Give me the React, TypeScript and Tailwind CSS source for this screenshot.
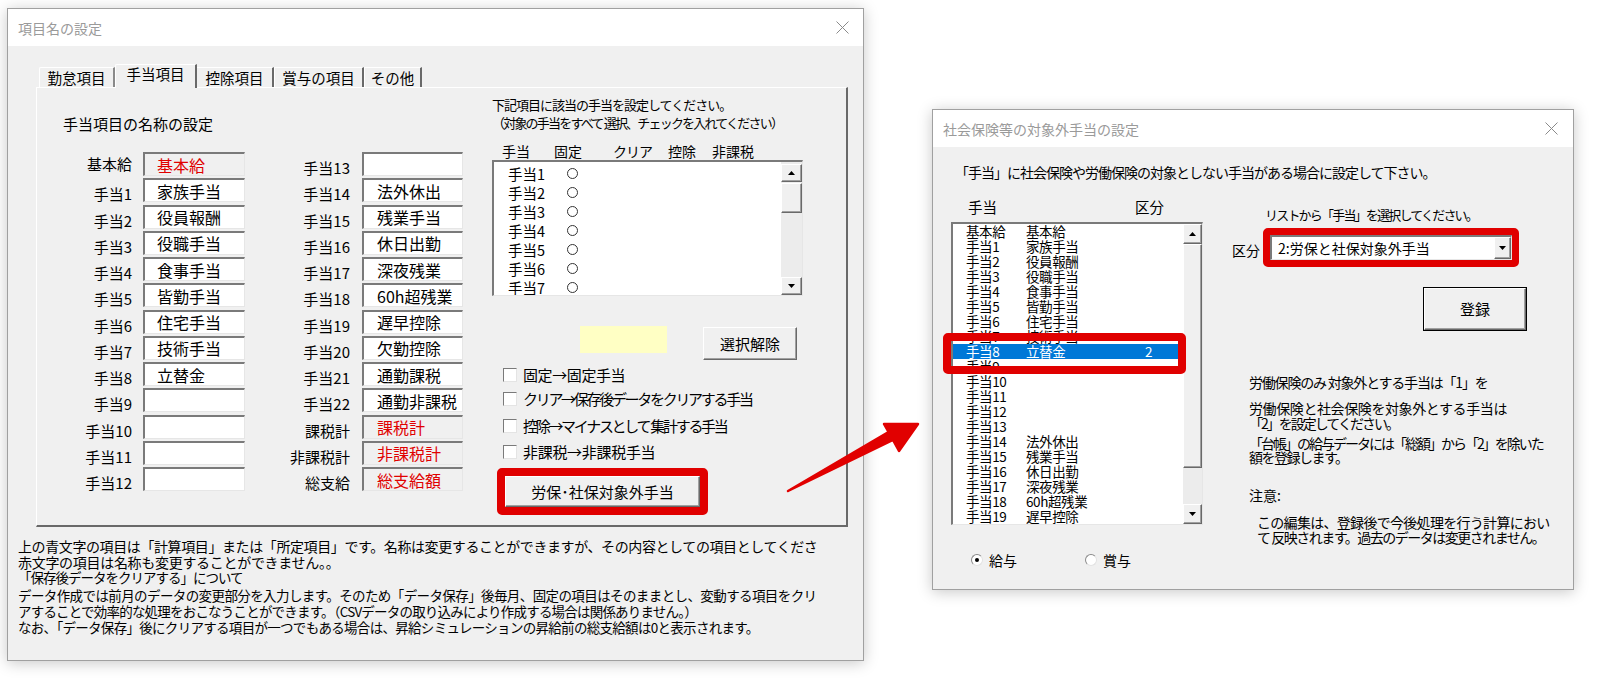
import React from 'react';

const sunken =
  'border-t-2 border-l-2 border-b border-r border-t-[#7a7a7a] border-l-[#7a7a7a] border-b-[#e6e6e6] border-r-[#e6e6e6]';
const raised =
  'border border-t-white border-l-white border-b-[#696969] border-r-[#696969] shadow-[inset_-1px_-1px_0_#a0a0a0]';

function CloseX() {
  return (
    <svg width="13" height="13" viewBox="0 0 13 13">
      <path d="M0.5 0.5 L12.5 12.5 M12.5 0.5 L0.5 12.5" stroke="#8a8a8a" strokeWidth="1" fill="none" />
    </svg>
  );
}

function Tri({ dir }: { dir: 'up' | 'down' }) {
  return (
    <svg width="7" height="4" viewBox="0 0 7 4">
      <path d={dir === 'up' ? 'M0 4 L3.5 0 L7 4Z' : 'M0 0 L7 0 L3.5 4Z'} fill="#000" />
    </svg>
  );
}

function SBtn({ dir, className }: { dir: 'up' | 'down'; className: string }) {
  return (
    <div className={`${raised} ${className} bg-[#f0f0f0] flex items-center justify-center shrink-0`}>
      <Tri dir={dir} />
    </div>
  );
}

interface FieldRow {
  label: string;
  value: string;
  fixed?: boolean;
  lb?: boolean;
}

const col1: FieldRow[] = [
  { label: '基本給', value: '基本給', fixed: true, lb: true },
  { label: '手当1', value: '家族手当' },
  { label: '手当2', value: '役員報酬' },
  { label: '手当3', value: '役職手当' },
  { label: '手当4', value: '食事手当' },
  { label: '手当5', value: '皆勤手当' },
  { label: '手当6', value: '住宅手当' },
  { label: '手当7', value: '技術手当' },
  { label: '手当8', value: '立替金' },
  { label: '手当9', value: '' },
  { label: '手当10', value: '' },
  { label: '手当11', value: '' },
  { label: '手当12', value: '' },
];

const col2: FieldRow[] = [
  { label: '手当13', value: '' },
  { label: '手当14', value: '法外休出' },
  { label: '手当15', value: '残業手当' },
  { label: '手当16', value: '休日出勤' },
  { label: '手当17', value: '深夜残業' },
  { label: '手当18', value: '60h超残業' },
  { label: '手当19', value: '遅早控除' },
  { label: '手当20', value: '欠勤控除' },
  { label: '手当21', value: '通勤課税' },
  { label: '手当22', value: '通勤非課税' },
  { label: '課税計', value: '課税計', fixed: true },
  { label: '非課税計', value: '非課税計', fixed: true },
  { label: '総支給', value: '総支給額', fixed: true },
];

function FieldColumn({ rows, second }: { rows: FieldRow[]; second?: boolean }) {
  return (
    <div className="flex flex-col">
      {rows.map((r) => (
        <div key={r.label} className="flex h-[26.25px]">
          <div
            className={`${second ? 'w-[105px] mr-[12px]' : 'w-[69px] mr-[11px]'} h-[24px] flex justify-end items-end text-[15px] leading-[16px] whitespace-nowrap ${r.lb ? 'pb-[4px]' : 'pb-0'}`}
          >
            {r.label}
          </div>
          <div
            className={`${sunken} ${second ? 'w-[101px] pl-[13px]' : 'w-[102px] pl-[12px]'} h-[24px] flex items-center text-[16px] leading-[20px] whitespace-nowrap ${r.fixed ? 'bg-[#f0f0f0] text-[#e00000]' : 'bg-white text-black'}`}
          >
            {r.value}
          </div>
        </div>
      ))}
    </div>
  );
}

function CheckRow({ text, className, track }: { text: string; className: string; track: string }) {
  return (
    <div className={`flex items-center ${className}`}>
      <span className="ml-[11px] w-[14px] h-[14px] bg-white border-t border-l border-t-[#7a7a7a] border-l-[#7a7a7a] border-b border-r border-b-[#e4e4e4] border-r-[#e4e4e4]" />
      <span className={`ml-[6px] text-[15px] leading-[16px] whitespace-nowrap ${track}`}>{text}</span>
    </div>
  );
}

function LeftDialog() {
  return (
    <div className="absolute left-[7px] top-[8px] w-[857px] h-[653px] flex flex-col border border-[#a0a0a0] bg-[#f0f0f0] shadow-[0_2px_14px_rgba(0,0,0,0.22)]">
      <div className="h-[37px] shrink-0 bg-white flex items-center justify-between pl-[10px] pr-[14px]">
        <span className="text-[14px] leading-[16px] text-[#9a9a9a]">項目名の設定</span>
        <CloseX />
      </div>

      <div className="flex-1 flex flex-col pt-[18px]">
        {/* tabs */}
        <div className="flex items-end h-[23px] ml-[31px] text-[14.5px] leading-[16px]">
          <div className="h-[20px] w-[76px] flex items-center justify-center border-t border-l border-r-2 border-t-white border-l-white border-r-[#8a8a8a] rounded-tl-[2px]">
            勤怠項目
          </div>
          <div className="relative z-10 -mb-px h-[24px] w-[82px] flex justify-center pt-[1px] border-t border-l border-r-2 border-t-white border-l-white border-r-[#696969] rounded-tl-[2px] bg-[#f0f0f0]">
            手当項目
          </div>
          <div className="h-[20px] w-[77px] flex items-center justify-center border-t border-r-2 border-t-white border-r-[#696969]">
            控除項目
          </div>
          <div className="h-[20px] w-[90px] flex items-center justify-center border-t border-l border-r-2 border-t-white border-l-white border-r-[#696969]">
            賞与の項目
          </div>
          <div className="h-[20px] w-[58px] flex items-center justify-center border-t border-l border-r-2 border-t-white border-l-white border-r-[#696969]">
            その他
          </div>
        </div>

        {/* panel */}
        <div className="ml-[28px] w-[812px] h-[440px] shrink-0 flex border-t border-l border-t-white border-l-white border-r-2 border-b-2 border-r-[#696969] border-b-[#696969]">
          <div className="w-[455px] shrink-0 pl-[26px] pt-[28px] flex flex-col">
            <div className="text-[15px] leading-[16px]">手当項目の名称の設定</div>
            <div className="mt-[20px] flex">
              <FieldColumn rows={col1} />
              <FieldColumn rows={col2} second />
            </div>
          </div>

          <div className="flex-1 pt-[8px] flex flex-col">
            <div className="text-[13px] leading-[18px] tracking-[-1px] whitespace-nowrap">
              下記項目に該当の手当を設定してください。
            </div>
            <div className="text-[13px] leading-[18px] tracking-[-1.8px] whitespace-nowrap">
              （対象の手当をすべて 選択、チェックを入れてください）
            </div>
            <div className="mt-[11px] h-[16px] flex text-[14px] leading-[16px]">
              <span className="ml-[10px] w-[52px]">手当</span>
              <span className="w-[59px]">固定</span>
              <span className="w-[55px] tracking-[-1px]">クリア</span>
              <span className="w-[44px]">控除</span>
              <span>非課税</span>
            </div>
            <div className={`${sunken} mt-[1px] w-[311px] h-[136px] bg-white flex`}>
              <div className="flex-1 pt-[2px] overflow-hidden">
                {[1, 2, 3, 4, 5, 6, 7].map((n) => (
                  <div key={n} className="h-[19px] flex items-center pl-[14px] text-[14.5px] leading-[16px]">
                    <span className="w-[59px]">手当{n}</span>
                    <span className="w-[11px] h-[11px] rounded-full border border-[#333]" />
                  </div>
                ))}
              </div>
              <div className="w-[21px] flex flex-col bg-[#ececec] pt-[2px]">
                <SBtn dir="up" className="h-[18px]" />
                <div className={`${raised} mt-[1px] h-[30px] bg-[#f0f0f0]`} />
                <div className="flex-1" />
                <SBtn dir="down" className="h-[18px]" />
              </div>
            </div>

            <div className="mt-[30px] flex items-start">
              <div className="ml-[88px] w-[87px] h-[27px] bg-[#ffffc4]" />
              <div className={`${raised} ml-[36px] mt-[1px] w-[94px] h-[33px] bg-[#f0f0f0] flex items-center justify-center text-[15px] leading-[16px]`}>
                選択解除
              </div>
            </div>

            <CheckRow text="固定→固定手当" className="mt-[3px] h-[24px]" track="tracking-[-0.4px]" />
            <CheckRow text="クリア→保存後データをクリアする手当" className="h-[24px]" track="tracking-[-2.3px]" />
            <CheckRow text="控除→マイナスとして 集計する手当" className="mt-[2px] h-[26px]" track="tracking-[-2.3px]" />
            <CheckRow text="非課税→非課税手当" className="h-[26px]" track="tracking-[-0.3px]" />

            <div className="mt-[3px] ml-[5px] w-[211px] h-[47px] border-[8px] border-[#e00000] rounded-[5px]">
              <div className={`${raised} w-full h-full bg-[#f0f0f0] flex items-center justify-center text-[15px] leading-[16px]`}>
                労保･社保対象外手当
              </div>
            </div>
          </div>
        </div>

        {/* notes */}
        <div className="pl-[10px] mt-[11px] flex flex-col whitespace-nowrap">
          <div className="h-[16px] text-[14px] leading-[16px] tracking-[-0.4px]">
            上の青文字の項目は「計算項目」または「所定項目」です。名称は変更することができますが、その内容としての項目としてくださ
          </div>
          <div className="h-[16px] text-[14px] leading-[16px] tracking-[-0.3px]">
            赤文字の項目は名称も変更することができません。。
          </div>
          <div className="h-[15px] text-[13.5px] leading-[15px] tracking-[-1px]">「保存後データをクリアする」について</div>
          <div className="mt-[2px] h-[16px] text-[13.5px] leading-[16px] tracking-[-0.6px]">
            データ作成では前月のデータの変更部分を入力します。そのため「データ保存」後毎月、固定の項目はそのままとし、変動する項目をクリ
          </div>
          <div className="h-[16px] text-[13.5px] leading-[16px] tracking-[-0.8px]">
            アすることで効率的な処理をおこなうことができます。（CSVデータの取り込みにより作成する場合は関係ありません。）
          </div>
          <div className="h-[16px] text-[13.5px] leading-[16px] tracking-[-0.7px]">
            なお、「データ保存」後にクリアする項目が一つでもある場合は、昇給シミュレーションの昇給前の総支給額は0と表示されます。
          </div>
        </div>
      </div>
    </div>
  );
}

const allowanceList: [string, string][] = [
  ['基本給', '基本給'],
  ['手当1', '家族手当'],
  ['手当2', '役員報酬'],
  ['手当3', '役職手当'],
  ['手当4', '食事手当'],
  ['手当5', '皆勤手当'],
  ['手当6', '住宅手当'],
  ['手当7', '技術手当'],
  ['手当8', '立替金'],
  ['手当9', ''],
  ['手当10', ''],
  ['手当11', ''],
  ['手当12', ''],
  ['手当13', ''],
  ['手当14', '法外休出'],
  ['手当15', '残業手当'],
  ['手当16', '休日出勤'],
  ['手当17', '深夜残業'],
  ['手当18', '60h超残業'],
  ['手当19', '遅早控除'],
];

function Radio({ checked, label }: { checked?: boolean; label: string }) {
  return (
    <div className="flex items-center">
      <span className="w-[12px] h-[12px] rounded-full bg-white border border-t-[#8a8a8a] border-l-[#8a8a8a] border-b-[#e2e2e2] border-r-[#e2e2e2] flex items-center justify-center">
        {checked && <span className="w-[4px] h-[4px] rounded-full bg-black" />}
      </span>
      <span className="ml-[6px] text-[14px] leading-[16px]">{label}</span>
    </div>
  );
}

function RightDialog() {
  return (
    <div className="absolute left-[932px] top-[109px] w-[642px] h-[481px] flex flex-col border border-[#a0a0a0] bg-[#f0f0f0] shadow-[0_2px_14px_rgba(0,0,0,0.22)]">
      <div className="h-[37px] shrink-0 bg-white flex items-center justify-between pl-[10px] pr-[15px]">
        <span className="text-[14px] leading-[16px] text-[#9a9a9a]">社会保険等の対象外手当の設定</span>
        <CloseX />
      </div>

      <div className="flex-1 flex flex-col">
        <div className="mt-[16px] pl-[22px] h-[18px] text-[14px] leading-[18px] tracking-[-1px] whitespace-nowrap">
          「手当」に社会保険や労働保険の対象としない手当がある場合に設定して下さい。
        </div>

        <div className="flex">
          {/* list column */}
          <div className="pl-[18px] w-[270px] flex flex-col">
            <div className="mt-[18px] h-[16px] flex text-[14.5px] leading-[16px]">
              <span className="ml-[17px] w-[167px]">手当</span>
              <span>区分</span>
            </div>
            <div className="relative mt-[7px] w-[252px] h-[303px]">
              <div className={`${sunken} w-full h-full bg-white flex`}>
                <div className="flex-1 overflow-hidden text-[13.5px] leading-[15px] tracking-[-0.4px]">
                  {allowanceList.map(([code, name], i) => (
                    <div
                      key={code}
                      className={`h-[15px] flex items-center pl-[13px] whitespace-nowrap ${i === 8 ? 'bg-[#0078d7] text-white' : 'text-black'}`}
                    >
                      <span className="w-[60px]">{code}</span>
                      <span className="w-[119px]">{name}</span>
                      <span>{i === 8 ? '2' : ''}</span>
                    </div>
                  ))}
                </div>
                <div className="w-[19px] flex flex-col bg-[#ececec]">
                  <SBtn dir="up" className="h-[20px]" />
                  <div className={`${raised} h-[224px] bg-[#f0f0f0]`} />
                  <div className="flex-1" />
                  <SBtn dir="down" className="h-[20px]" />
                </div>
              </div>
              <div className="absolute left-[-8px] top-[111px] w-[243px] h-[41px] border-[8px] border-[#e00000] rounded-[5px]" />
            </div>
            <div className="mt-[27px] h-[16px] flex items-center">
              <div className="ml-[20px] w-[114px]">
                <Radio checked label="給与" />
              </div>
              <Radio label="賞与" />
            </div>
          </div>

          {/* settings column */}
          <div className="ml-[29px] flex-1 flex flex-col whitespace-nowrap">
            <div className="mt-[26px] ml-[33px] h-[16px] text-[13px] leading-[16px] tracking-[-1.8px]">
              リストから「手当」を選択してください。
            </div>
            <div className="mt-[5px] flex items-start">
              <span className="mt-[14px] w-[31px] text-[14px] leading-[16px]">区分</span>
              <div className="w-[256px] h-[39px] border-[7px] border-[#e00000] rounded-[5px]">
                <div className={`${sunken} w-full h-[25px] bg-white flex items-center`}>
                  <span className="flex-1 pl-[6px] text-[14px] leading-[16px]">2:労保と社保対象外手当</span>
                  <div className={`${raised} w-[17px] h-full bg-[#f0f0f0] flex items-center justify-center`}>
                    <Tri dir="down" />
                  </div>
                </div>
              </div>
            </div>
            <div className="mt-[20px] ml-[191px] w-[104px] h-[44px] border border-black">
              <div className={`${raised} w-full h-full bg-[#f0f0f0] flex items-center justify-center text-[15px] leading-[16px]`}>
                登録
              </div>
            </div>

            <div className="pl-[17px] flex flex-col text-[14px]">
              <div className="mt-[43px] h-[16px] leading-[16px] tracking-[-1.2px]">労働保険のみ 対象外とする手当は「1」を</div>
              <div className="mt-[10.5px] leading-[15px]">
                <div className="tracking-[-0.4px]">労働保険と社会保険を対象外とする手当は</div>
                <div className="tracking-[-2px]">「2」を設定してください。</div>
              </div>
              <div className="mt-[5.5px] leading-[14px]">
                <div className="tracking-[-2px]">「台帳」の給与データには「総額」から「2」を除いた</div>
                <div className="tracking-[-1.5px]">額を登録します。</div>
              </div>
              <div className="mt-[23px] h-[16px] leading-[16px]">注意:</div>
              <div className="mt-[11.5px] ml-[8px] leading-[15px]">
                <div className="tracking-[-0.7px]">この編集は、登録後で今後処理を行う計算におい</div>
                <div className="tracking-[-1.5px]">て 反映されます。過去のデータは変更されません。</div>
              </div>
            </div>
          </div>
        </div>
      </div>
    </div>
  );
}

function Arrow() {
  return (
    <svg className="absolute left-[780px] top-[415px]" width="145" height="85" viewBox="0 0 145 85">
      <path
        d="M138 9 L104 9 L108.5 17 L8 76 L113 25 L119 36 Z"
        fill="#e10000"
        stroke="#e10000"
        strokeWidth="2.5"
        strokeLinejoin="round"
      />
    </svg>
  );
}

export default function App() {
  return (
    <div className="relative w-[1599px] h-[682px] overflow-hidden bg-white text-black font-['Noto_Sans_CJK_JP',sans-serif]">
      <LeftDialog />
      <RightDialog />
      <Arrow />
    </div>
  );
}
